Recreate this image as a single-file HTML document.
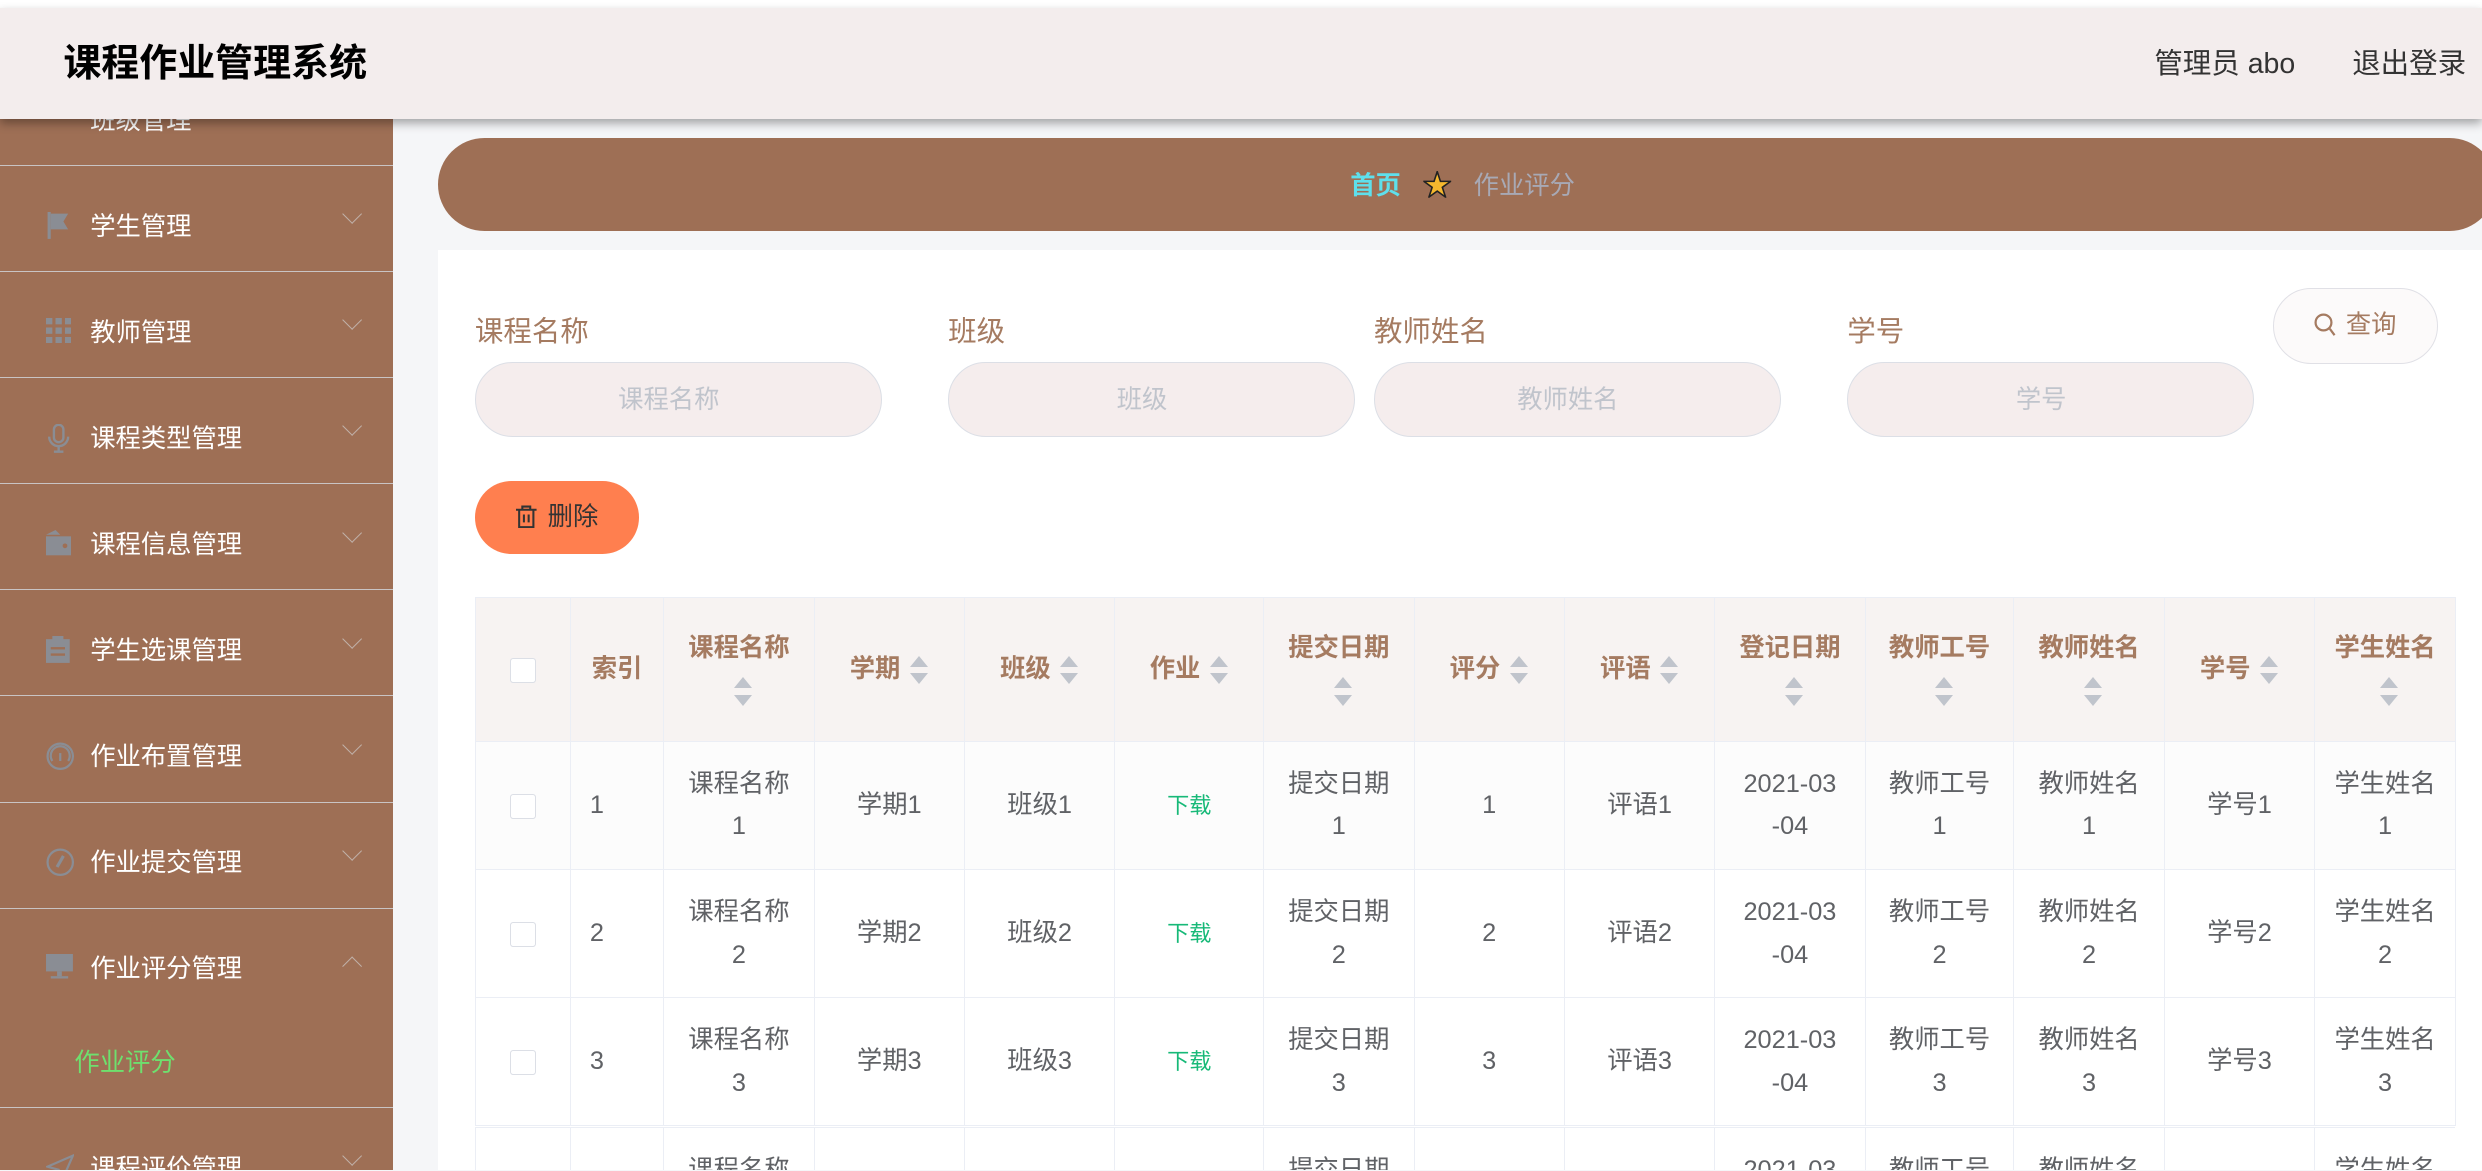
<!DOCTYPE html>
<html><head><meta charset="utf-8"><style>
*{box-sizing:border-box;margin:0;padding:0}
html,body{width:2482px;height:1171px;overflow:hidden;background:#f5f6f8}
#w{zoom:1.58291;width:1568px;height:739px;position:relative;overflow:hidden;font-family:"Liberation Sans","Noto Sans CJK SC",sans-serif;background:#f5f6f8}
.abs{position:absolute}
#side{left:0;top:0;width:248px;height:740px;background:#9e6f55}
.mi{position:absolute;left:0;width:248px;height:67px;border-bottom:1px solid #c9c4c4;color:#fff;font-size:16px;line-height:67px;padding-left:57px;padding-top:5px}
.mi svg.ic{position:absolute;left:29px;top:29px}
.mi .ar{position:absolute;left:218px;top:26px;width:9px;height:9px;border-right:1px solid #c0b0a8;border-bottom:1px solid #c0b0a8;transform:rotate(45deg)}
.mi .ar.up{transform:rotate(225deg);top:32px}
#top{left:0;top:0;width:1568px;height:5px;background:#fff}
#hdr{left:0;top:5px;width:1568px;height:70px;background:#f3eded;box-shadow:0 3px 6px rgba(0,0,0,.35)}
#bc{left:277px;top:87px;width:1300px;height:59px;background:#9e6f55;border-radius:30px;font-size:16px;line-height:61px}
#panel{left:277px;top:158px;width:1291px;height:600px;background:#fff}
.lab{position:absolute;top:195px;font-size:18px;color:#a57b61}
.inp{position:absolute;top:229px;width:257px;height:47px;border:1px solid #dcdfe6;background:#f5eded;border-radius:24px;text-align:center;line-height:47px;color:#c0c4cc;font-size:16px;padding-right:12px}
table{position:absolute;left:300px;top:377px;border-collapse:collapse;table-layout:fixed;width:1251px}
td,th{border:1px solid #ebeef5;text-align:center;font-size:16px;line-height:27px;color:#606266;font-weight:normal;padding:0 8px;overflow:hidden}
th{background:#f7f3f2;color:#a57b61;font-weight:bold;height:91px}
td{height:81px}
tr.r1 td{background:#fcfcfc}
.s{display:inline-block;width:12px;height:18px;vertical-align:middle;position:relative;margin-left:6px}
.s:before{content:"";position:absolute;left:0;top:0;border:6px solid transparent;border-bottom:7px solid #c0c4cc;border-top:0}
.s:after{content:"";position:absolute;left:0;bottom:0;border:6px solid transparent;border-top:7px solid #c0c4cc;border-bottom:0}
.cb{display:inline-block;width:16px;height:16px;border:1px solid #dcdfe6;border-radius:2px;background:#fff;vertical-align:middle}
.dl{color:#17b978;font-size:14px}
</style></head><body><div id="w">
<div id="side" class="abs">
 <div class="mi" style="top:38px">班级管理</div>
 <div class="mi" style="top:105px"><svg class="ic" width="16" height="17" viewBox="0 0 16 17"><path d="M2 0v17" stroke="#8a8d94" stroke-width="2"/><path d="M3 1h11l-3 5 3 5H3z" fill="#8a8d94"/></svg>学生管理<span class="ar"></span></div>
 <div class="mi" style="top:172px"><svg class="ic" width="16" height="16" viewBox="0 0 16 16" fill="#8a8d94"><rect x="0" y="0" width="4" height="4"/><rect x="6" y="0" width="4" height="4"/><rect x="12" y="0" width="4" height="4"/><rect x="0" y="6" width="4" height="4"/><rect x="6" y="6" width="4" height="4"/><rect x="12" y="6" width="4" height="4"/><rect x="0" y="12" width="4" height="4"/><rect x="6" y="12" width="4" height="4"/><rect x="12" y="12" width="4" height="4"/></svg>教师管理<span class="ar"></span></div>
 <div class="mi" style="top:239px"><svg class="ic" width="16" height="18" viewBox="0 0 16 18" fill="none" stroke="#8a8d94" stroke-width="1.5"><rect x="5" y="0.5" width="6" height="11" rx="3"/><path d="M2 8a6 6 0 0 0 12 0M8 14v4M5 17.5h6"/></svg>课程类型管理<span class="ar"></span></div>
 <div class="mi" style="top:306px"><svg class="ic" width="16" height="16" viewBox="0 0 16 16" fill="#8a8d94"><path d="M6 0l3 3H0z"/><rect x="0" y="4" width="16" height="12"/><circle cx="12" cy="10" r="1.5" fill="#9e6f55"/></svg>课程信息管理<span class="ar"></span></div>
 <div class="mi" style="top:373px"><svg class="ic" width="15" height="17" viewBox="0 0 15 17" fill="#8a8d94"><rect x="0" y="2" width="15" height="15"/><rect x="4" y="0" width="7" height="3"/><rect x="3" y="7" width="9" height="1.5" fill="#9e6f55"/><rect x="3" y="11" width="9" height="1.5" fill="#9e6f55"/></svg>学生选课管理<span class="ar"></span></div>
 <div class="mi" style="top:440px"><svg class="ic" width="18" height="18" viewBox="0 0 18 18" fill="none" stroke="#8a8d94" stroke-width="1.4"><circle cx="9" cy="9" r="8"/><path d="M4 12a6 6 0 1 1 10 0"/><path d="M9 12V7"/></svg>作业布置管理<span class="ar"></span></div>
 <div class="mi" style="top:507px"><svg class="ic" width="18" height="18" viewBox="0 0 18 18" fill="none" stroke="#8a8d94" stroke-width="1.4"><circle cx="9" cy="9" r="8"/><path d="M7 12l4-7" stroke-width="2"/></svg>作业提交管理<span class="ar"></span></div>
 <div class="mi" style="top:574px;height:126px"><svg class="ic" width="17" height="16" viewBox="0 0 17 16" fill="#8a8d94"><rect x="0" y="0" width="17" height="11"/><rect x="7" y="11" width="3" height="3"/><rect x="3" y="14" width="11" height="1.5"/></svg>作业评分管理<span class="ar up"></span>
  <div style="position:absolute;left:47px;top:83px;line-height:30px;font-size:16px;color:#6ee06e">作业评分</div></div>
 <div class="mi" style="top:700px"><svg class="ic" width="18" height="18" viewBox="0 0 18 18" fill="none" stroke="#8a8d94" stroke-width="1.4"><path d="M17 1L1 8l7 2 2 7z"/></svg>课程评价管理<span class="ar"></span></div>
</div>
<div id="top" class="abs"></div>
<div id="hdr" class="abs">
 <div class="abs" style="left:40px;top:21px;font-size:24px;font-weight:bold;color:#000;line-height:30px">课程作业管理系统</div>
 <div class="abs" style="left:1361px;top:24px;font-size:18px;color:#333;line-height:24px">管理员 abo</div>
 <div class="abs" style="left:1486px;top:24px;font-size:18px;color:#333;line-height:24px">退出登录</div>
</div>
<div id="bc" class="abs"><span class="abs" style="left:576px;color:#5ee0ec;font-weight:bold">首页</span><span class="abs" style="left:622px;top:0;color:#f5b82e;font-size:18px;-webkit-text-stroke:1px #222">★</span><span class="abs" style="left:654px;color:#a8a9b5">作业评分</span></div>
<div id="panel" class="abs"></div>
<div class="lab" style="left:300px">课程名称</div><div class="inp" style="left:300px">课程名称</div>
<div class="lab" style="left:599px">班级</div><div class="inp" style="left:599px">班级</div>
<div class="lab" style="left:868px">教师姓名</div><div class="inp" style="left:868px">教师姓名</div>
<div class="lab" style="left:1167px">学号</div><div class="inp" style="left:1167px">学号</div>
<div class="abs" style="left:1436px;top:182px;width:104px;height:48px;border:1px solid #e0e0e6;border-radius:24px;background:#fcfafa;color:#a57b61;font-size:16px;line-height:46px;text-align:center"><svg width="14" height="15" viewBox="0 0 14 15" style="vertical-align:-2px;margin-right:6px" fill="none" stroke="#a57b61" stroke-width="1.4"><circle cx="6" cy="6" r="5"/><path d="M10 10l3 4"/></svg>查询</div>
<div class="abs" style="left:300px;top:304px;width:104px;height:46px;border-radius:23px;background:#ff7f4f;color:#333;font-size:16px;line-height:46px;text-align:center"><svg width="13" height="15" viewBox="0 0 13 15" style="vertical-align:-2px;margin-right:7px" fill="none" stroke="#333" stroke-width="1.3"><path d="M0 3h13M4 3V1h5v2M2 3v11h9V3M5 6v5M8 6v5"/></svg>删除</div>
<table>
<colgroup><col style="width:60px"><col style="width:59px"><col style="width:95px"><col style="width:95px"><col style="width:95px"><col style="width:94px"><col style="width:95px"><col style="width:95px"><col style="width:95px"><col style="width:95px"><col style="width:94px"><col style="width:95px"><col style="width:95px"><col style="width:89px"></colgroup>
<tr><th><span class="cb"></span></th><th>索引</th><th>课程名称<br><span class="s"></span></th><th>学期<span class="s"></span></th><th>班级<span class="s"></span></th><th>作业<span class="s"></span></th><th>提交日期<br><span class="s"></span></th><th>评分<span class="s"></span></th><th>评语<span class="s"></span></th><th>登记日期<br><span class="s"></span></th><th>教师工号<br><span class="s"></span></th><th>教师姓名<br><span class="s"></span></th><th>学号<span class="s"></span></th><th>学生姓名<br><span class="s"></span></th></tr>
<tr class="r1"><td><span class="cb"></span></td><td style="text-align:left;padding-left:12px">1</td><td>课程名称<br>1</td><td>学期1</td><td>班级1</td><td><span class="dl">下载</span></td><td>提交日期<br>1</td><td>1</td><td>评语1</td><td>2021-03<br>-04</td><td>教师工号<br>1</td><td>教师姓名<br>1</td><td>学号1</td><td>学生姓名<br>1</td></tr>
<tr><td><span class="cb"></span></td><td style="text-align:left;padding-left:12px">2</td><td>课程名称<br>2</td><td>学期2</td><td>班级2</td><td><span class="dl">下载</span></td><td>提交日期<br>2</td><td>2</td><td>评语2</td><td>2021-03<br>-04</td><td>教师工号<br>2</td><td>教师姓名<br>2</td><td>学号2</td><td>学生姓名<br>2</td></tr>
<tr><td><span class="cb"></span></td><td style="text-align:left;padding-left:12px">3</td><td>课程名称<br>3</td><td>学期3</td><td>班级3</td><td><span class="dl">下载</span></td><td>提交日期<br>3</td><td>3</td><td>评语3</td><td>2021-03<br>-04</td><td>教师工号<br>3</td><td>教师姓名<br>3</td><td>学号3</td><td>学生姓名<br>3</td></tr>
</table>
<div class="abs" style="left:300px;top:712px;width:1251px;height:40px;overflow:hidden">
<table style="left:0;top:0"><colgroup><col style="width:60px"><col style="width:59px"><col style="width:95px"><col style="width:95px"><col style="width:95px"><col style="width:94px"><col style="width:95px"><col style="width:95px"><col style="width:95px"><col style="width:95px"><col style="width:94px"><col style="width:95px"><col style="width:95px"><col style="width:89px"></colgroup>
<tr><td></td><td></td><td>课程名称<br>4</td><td></td><td></td><td></td><td>提交日期<br>4</td><td></td><td></td><td>2021-03<br>-04</td><td>教师工号<br>4</td><td>教师姓名<br>4</td><td></td><td>学生姓名<br>4</td></tr></table></div>
</div></body></html>
